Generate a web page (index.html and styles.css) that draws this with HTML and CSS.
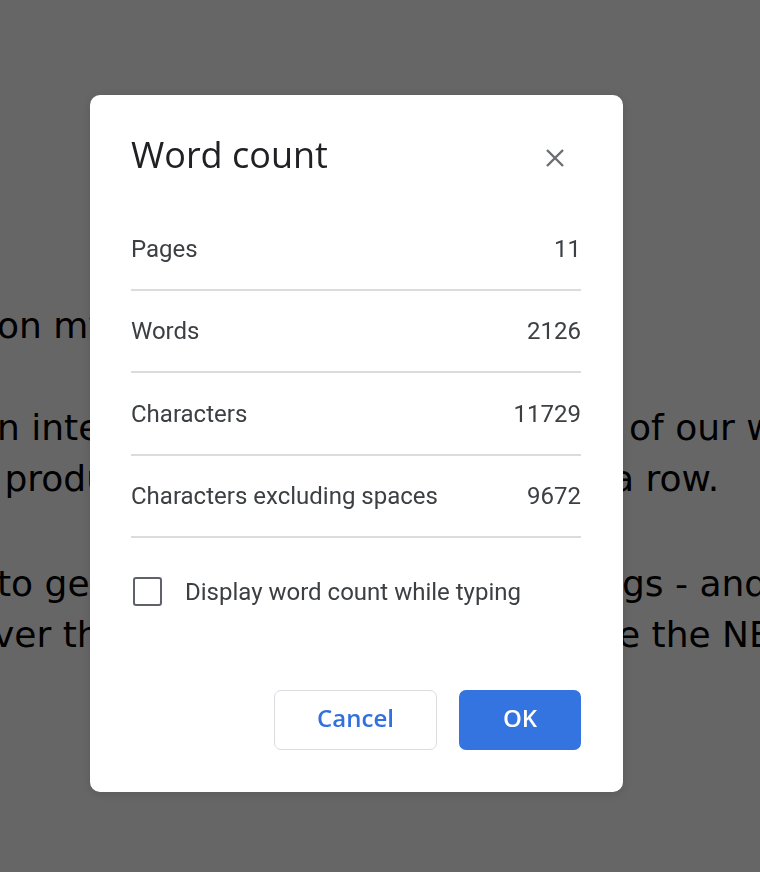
FILE: index.html
```html
<!DOCTYPE html>
<html lang="en">
<head>
    <meta charset="UTF-8">
    <meta name="viewport" content="width=device-width, initial-scale=1.0">
    <title>Word count</title>
    <link rel="stylesheet" href="styles.css">
</head>
<body>

    <!-- Document text behind the dialog -->
    <div class="doc">
        <p class="doc-para">
            <span class="doc-line"><span>on my desk</span></span>
        </p>
        <p class="doc-para">
            <span class="doc-line"><span>n interest</span><span class="tail tail-a">of our website</span></span>
            <span class="doc-line"><span class="head-in"> products</span><span class="tail">a row.</span></span>
        </p>
        <p class="doc-para">
            <span class="doc-line"><span>to get</span><span class="tail tail-b">gs - and more</span></span>
            <span class="doc-line"><span class="head-in">ver the</span><span class="tail tail-c">e the NEW</span></span>
        </p>
    </div>

    <!-- Dimmed backdrop -->
    <div class="scrim"></div>

    <!-- Word count dialog -->
    <div class="dialog" role="dialog" aria-labelledby="dialog-title">
        <div class="dialog-header">
            <h2 class="dialog-title" id="dialog-title">Word count</h2>
            <button class="close-btn" aria-label="Close">
                <svg width="18" height="18" viewBox="0 0 18 18">
                    <path d="M1 1 L17 17 M17 1 L1 17" stroke="#6b6e72" stroke-width="2.4" fill="none"/>
                </svg>
            </button>
        </div>

        <div class="stat-row"><span>Pages</span><span>11</span></div>
        <div class="stat-row"><span>Words</span><span>2126</span></div>
        <div class="stat-row"><span>Characters</span><span>11729</span></div>
        <div class="stat-row"><span>Characters excluding spaces</span><span>9672</span></div>

        <label class="check-row">
            <span class="check-box"></span>
            <span>Display word count while typing</span>
        </label>

        <div class="dialog-actions">
            <button class="btn btn-cancel">Cancel</button>
            <button class="btn btn-ok">OK</button>
        </div>
    </div>

</body>
</html>
```

FILE: styles.css
```css
/* General */
body {
    margin: 0;
    height: 872px;
    overflow: hidden;
    background: #fff;
    font-family: "DejaVu Sans", sans-serif;
}

/* Document behind */
.doc {
    padding-top: 300px;
    margin-left: -3px;
    font-size: 36px;
    line-height: 51px;
    color: #000;
}

.doc-para {
    margin: 0 0 51px;
}

.doc-para:nth-child(2) {
    margin-bottom: 54px;
}

.doc-line {
    display: grid;
    grid-template-columns: 615px max-content;
    white-space: pre;
}

.head-in { margin-left: -4px; }

.tail-a { padding-left: 17px; }
.tail-b { padding-left: 10px; }
.tail-c { padding-left: 6px; }

/* Backdrop */
.scrim {
    position: fixed;
    inset: 0;
    background: rgba(0, 0, 0, 0.6);
}

/* Dialog */
.dialog {
    position: absolute;
    left: 90px;
    top: 95px;
    width: 533px;
    box-sizing: border-box;
    padding: 36px 42px 42px 41px;
    background: #fff;
    border-radius: 10px;
    box-shadow: 0 2px 8px rgba(0, 0, 0, 0.12);
    font-family: Roboto, "Liberation Sans", sans-serif;
    color: #3c4043;
}

.dialog-header {
    display: flex;
    align-items: flex-start;
    justify-content: space-between;
    margin-bottom: 29px;
}

.dialog-title {
    margin: 0;
    font-family: "Open Sans", sans-serif;
    font-size: 36px;
    font-weight: 400;
    line-height: 48px;
    color: #202124;
}

.close-btn {
    width: 52px;
    height: 48px;
    box-sizing: border-box;
    padding: 5px 0 0;
    border: none;
    background: none;
    display: flex;
    align-items: center;
    justify-content: center;
    cursor: pointer;
}

/* Stats */
.stat-row {
    display: flex;
    justify-content: space-between;
    padding: 26.5px 0 26px;
    font-size: 24px;
    line-height: 28px;
    border-bottom: 2px solid #dadce0;
}

/* Checkbox */
.check-row {
    display: flex;
    align-items: center;
    gap: 23px;
    margin-top: 39px;
    padding-left: 2px;
    font-size: 24px;
    line-height: 28px;
    cursor: pointer;
}

.check-box {
    width: 29px;
    height: 29px;
    box-sizing: border-box;
    border: 2.5px solid #5f6368;
    border-radius: 3px;
}

/* Buttons */
.dialog-actions {
    display: flex;
    justify-content: flex-end;
    gap: 22px;
    margin-top: 84px;
}

.btn {
    height: 60px;
    padding: 0 0 6px;
    border-radius: 7px;
    font-family: "Open Sans", sans-serif;
    font-size: 24px;
    font-weight: 600;
    cursor: pointer;
}

.btn-cancel {
    width: 163px;
    background: #fff;
    border: 1.7px solid #dadce0;
    color: #3171de;
}

.btn-ok {
    width: 122px;
    background: #3474e0;
    border: none;
    color: #fff;
}
```
